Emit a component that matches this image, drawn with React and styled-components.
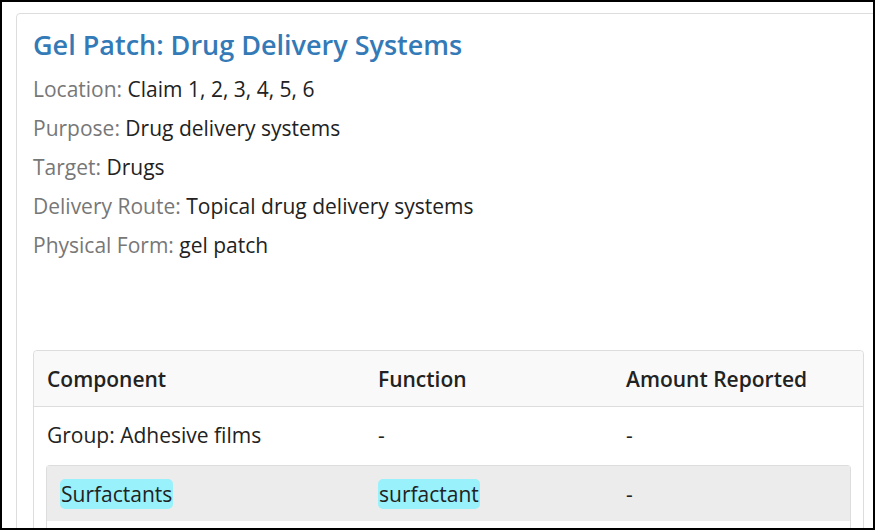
import React from 'react'
import styled, { createGlobalStyle } from 'styled-components'

const GlobalStyle = createGlobalStyle`
  html, body {
    margin: 0;
    padding: 0;
    background: #fff;
  }
  body {
    font-family: "Open Sans", "Liberation Sans", sans-serif;
  }
`

const Frame = styled.div`
  width: 875px;
  height: 530px;
  box-sizing: border-box;
  border: 2px solid #000;
  overflow: hidden;
  padding: 11px 0 0 14px;
`

const Card = styled.div`
  width: 864px;
  border: 1px solid #ddd;
  border-radius: 4px;
  padding: 14px 16px 0 16px;
  box-sizing: border-box;
  min-height: 600px;
`

const Title = styled.h2`
  margin: 0 0 13px;
  font-size: 27px;
  font-weight: 600;
  line-height: 34px;
  color: #337ab7;
`

const Detail = styled.p`
  margin: 0 0 11px;
  font-size: 21px;
  line-height: 28px;
  color: #222;
`

const Label = styled.span`
  color: #777;
`

const Table = styled.div`
  margin-top: 91px;
  width: 829px;
  border: 1px solid #ddd;
  border-radius: 4px;
  color: #222;
  font-size: 21px;
`

const Row = styled.div`
  display: grid;
  grid-template-columns: 331px 248px 1fr;
  align-items: center;
  height: ${p => p.$h || 55}px;
  padding-bottom: ${p => p.$head ? 0 : 2}px;
  box-sizing: border-box;
  background: ${p => p.$head ? '#f9f9f9' : 'transparent'};
  border-bottom: ${p => p.$head ? '1px solid #ddd' : 'none'};
  font-weight: ${p => p.$head ? 600 : 400};
  border-radius: ${p => p.$head ? '4px 4px 0 0' : '0'};
`

const Cell = styled.div`
  padding-left: 13px;
`

const Nested = styled.div`
  margin: 0 12px;
  border: 1px solid #ddd;
  border-bottom: none;
  border-radius: 4px 4px 0 0;
  min-height: 80px;
`

const NestedRow = styled.div`
  display: grid;
  grid-template-columns: 318px 248px 1fr;
  align-items: center;
  height: 55px;
  background: #ececec;
`

const Mark = styled.span`
  background: #98f1fb;
  border-radius: 5px;
  padding: 1px 1px;
`

export default function App() {
  return (
    <>
      <GlobalStyle />
      <Frame>
        <Card>
          <Title>Gel Patch: Drug Delivery Systems</Title>
          <Detail><Label>Location:</Label> Claim 1, 2, 3, 4, 5, 6</Detail>
          <Detail><Label>Purpose:</Label> Drug delivery systems</Detail>
          <Detail><Label>Target:</Label> Drugs</Detail>
          <Detail><Label>Delivery Route:</Label> Topical drug delivery systems</Detail>
          <Detail><Label>Physical Form:</Label> gel patch</Detail>

          <Table>
            <Row $head $h={56}>
              <Cell>Component</Cell>
              <Cell>Function</Cell>
              <Cell>Amount Reported</Cell>
            </Row>
            <Row $h={58}>
              <Cell>Group: Adhesive films</Cell>
              <Cell>-</Cell>
              <Cell>-</Cell>
            </Row>
            <Nested>
              <NestedRow>
                <Cell><Mark>Surfactants</Mark></Cell>
                <Cell><Mark>surfactant</Mark></Cell>
                <Cell>-</Cell>
              </NestedRow>
            </Nested>
          </Table>
        </Card>
      </Frame>
    </>
  )
}
